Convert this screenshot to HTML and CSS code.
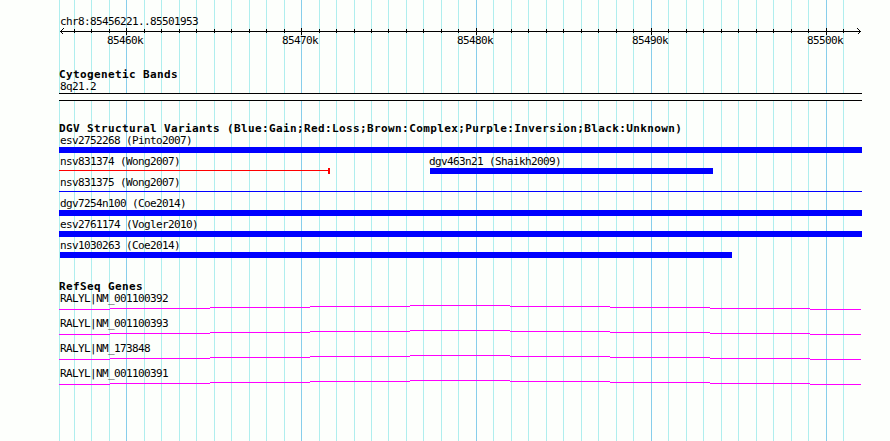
FILE: index.html
```html
<!DOCTYPE html>
<html lang="en">
<head>
  <meta charset="UTF-8">
  <meta name="viewport" content="width=device-width, initial-scale=1.0">
  <title>chr8:85456221..85501953</title>
  <link rel="stylesheet" href="styles.css">
</head>
<body>
  <div class="browser">
    <!-- grid lines, every 1k with a darker one every 10k -->
    <svg class="grid" width="890" height="441">
      <path class="minor" d="M59.5 0v441M74.5 0v441M91.5 0v441M109.5 0v441M144.5 0v441M161.5 0v441M179.5 0v441M196.5 0v441M214.5 0v441M231.5 0v441M249.5 0v441M266.5 0v441M284.5 0v441M319.5 0v441M336.5 0v441M354.5 0v441M371.5 0v441M388.5 0v441M406.5 0v441M423.5 0v441M441.5 0v441M458.5 0v441M493.5 0v441M511.5 0v441M528.5 0v441M546.5 0v441M563.5 0v441M581.5 0v441M598.5 0v441M616.5 0v441M633.5 0v441M668.5 0v441M686.5 0v441M703.5 0v441M721.5 0v441M738.5 0v441M756.5 0v441M773.5 0v441M791.5 0v441M808.5 0v441M843.5 0v441"/>
      <path class="major" d="M126.5 0v441M301.5 0v441M476.5 0v441M651.5 0v441M826.5 0v441"/>
    </svg>

    <div class="tracks">
      <div class="scale">
        <div class="label">chr8:85456221..85501953</div>
        <svg class="ruler" width="803" height="21" viewBox="59 27 803 21">
          <path d="M60 31.5H861"/>
          <path d="M60.5 31.5l3 -3M60.5 31.5l3 3M860.5 31.5l-3 -3M860.5 31.5l-3 3"/>
          <path d="M74.5 29v4M91.5 29v4M109.5 29v4M144.5 29v4M161.5 29v4M179.5 29v4M196.5 29v4M214.5 29v4M231.5 29v4M249.5 29v4M266.5 29v4M284.5 29v4M319.5 29v4M336.5 29v4M354.5 29v4M371.5 29v4M388.5 29v4M406.5 29v4M423.5 29v4M441.5 29v4M458.5 29v4M493.5 29v4M511.5 29v4M528.5 29v4M546.5 29v4M563.5 29v4M581.5 29v4M598.5 29v4M616.5 29v4M633.5 29v4M668.5 29v4M686.5 29v4M703.5 29v4M721.5 29v4M738.5 29v4M756.5 29v4M773.5 29v4M791.5 29v4M808.5 29v4M843.5 29v4"/>
          <path d="M126.5 28v7M301.5 28v7M476.5 28v7M651.5 28v7M826.5 28v7"/>
          <text x="107" y="44">85460k</text>
          <text x="282" y="44">85470k</text>
          <text x="457" y="44">85480k</text>
          <text x="632" y="44">85490k</text>
          <text x="807" y="44">85500k</text>
        </svg>
      </div>

      <div class="track bands">
        <h2>Cytogenetic Bands</h2>
        <div class="label">8q21.2</div>
        <div class="band"></div>
      </div>

      <div class="track variants">
        <h2>DGV Structural Variants (Blue:Gain;Red:Loss;Brown:Complex;Purple:Inversion;Black:Unknown)</h2>
        <div class="row">
          <div class="feature">
            <div class="label">esv2752268 (Pinto2007)</div>
            <div class="bar"></div>
          </div>
        </div>
        <div class="row split">
          <div class="feature">
            <div class="label">nsv831374 (Wong2007)</div>
            <div class="line loss"></div>
          </div>
          <div class="feature">
            <div class="label">dgv463n21 (Shaikh2009)</div>
            <div class="bar shaikh"></div>
          </div>
        </div>
        <div class="row">
          <div class="feature">
            <div class="label">nsv831375 (Wong2007)</div>
            <div class="line gain"></div>
          </div>
        </div>
        <div class="row">
          <div class="feature">
            <div class="label">dgv7254n100 (Coe2014)</div>
            <div class="bar"></div>
          </div>
        </div>
        <div class="row">
          <div class="feature">
            <div class="label">esv2761174 (Vogler2010)</div>
            <div class="bar"></div>
          </div>
        </div>
        <div class="row">
          <div class="feature">
            <div class="label">nsv1030263 (Coe2014)</div>
            <div class="bar coe"></div>
          </div>
        </div>
      </div>

      <div class="track genes">
        <h2>RefSeq Genes</h2>
        <div class="gene">
          <div class="label">RALYL|NM_001100392</div>
          <svg class="intron" width="803" height="5"><path d="M0 4.5H51M51 3.5H151M151 2.5H251M251 1.5H351M351 .5H451M451 1.5H551M551 2.5H651M651 3.5H751M751 4.5H802"/></svg>
        </div>
        <div class="gene">
          <div class="label">RALYL|NM_001100393</div>
          <svg class="intron" width="803" height="5"><path d="M0 4.5H51M51 3.5H151M151 2.5H251M251 1.5H351M351 .5H451M451 1.5H551M551 2.5H651M651 3.5H751M751 4.5H802"/></svg>
        </div>
        <div class="gene">
          <div class="label">RALYL|NM_173848</div>
          <svg class="intron" width="803" height="5"><path d="M0 4.5H51M51 3.5H151M151 2.5H251M251 1.5H351M351 .5H451M451 1.5H551M551 2.5H651M651 3.5H751M751 4.5H802"/></svg>
        </div>
        <div class="gene">
          <div class="label">RALYL|NM_001100391</div>
          <svg class="intron" width="803" height="5"><path d="M0 4.5H51M51 3.5H151M151 2.5H251M251 1.5H351M351 .5H451M451 1.5H551M551 2.5H651M651 3.5H751M751 4.5H802"/></svg>
        </div>
      </div>
    </div>
  </div>
</body>
</html>
```
FILE: styles.css
```css
* {
  box-sizing: border-box;
  margin: 0;
  padding: 0;
}

body {
  background-color: #fdfffc;
  color: #000;
  font-family: 'DejaVu Sans Mono', monospace;
}

svg {
  display: block;
}

.browser {
  position: relative;
  width: 890px;
  height: 441px;
  overflow: hidden;
}

.grid {
  position: absolute;
  top: 0;
  left: 0;
}

.grid path {
  shape-rendering: crispEdges;
}

.minor {
  stroke: #afeeee;
}

.major {
  stroke: #87ceeb;
}

.tracks {
  position: relative;
  width: 803px;
  margin-left: 59px;
  padding-top: 15px;
}

.label {
  height: 12px;
  padding-left: 1px;
  font-size: 11px;
  line-height: 14px;
  letter-spacing: -0.62px;
  white-space: pre;
}

h2 {
  height: 13px;
  padding-top: 1px;
  font-size: 11px;
  line-height: 13px;
  letter-spacing: 0.38px;
  white-space: pre;
}

.ruler path {
  stroke: #000;
  shape-rendering: crispEdges;
}

.ruler text {
  font-size: 11px;
  letter-spacing: -0.62px;
}

.bands {
  margin-top: 19px;
}

.band {
  height: 8px;
  margin-top: 1px;
  background-color: #fdfffc;
  border-top: 1px solid #000;
  border-bottom: 1px solid #000;
}

.variants {
  margin-top: 20px;
}

.row {
  height: 21px;
}

.split {
  display: grid;
  grid-template-columns: 369px 1fr;
}

.bar {
  height: 6px;
  margin-top: 1px;
  background-color: #0000ff;
}

.shaikh {
  width: 283px;
  margin-left: 2px;
}

.coe {
  width: 672px;
  margin-left: 1px;
}

.line {
  height: 6px;
  margin-top: 1px;
}

.gain {
  background: linear-gradient(#0000ff, #0000ff) 0 2px / 100% 1px no-repeat;
}

.loss {
  width: 271px;
  background: linear-gradient(#ff0000, #ff0000) 0 2px / 100% 1px no-repeat;
  border-right: 2px solid #ff0000;
}

.genes {
  margin-top: 19px;
}

.gene {
  height: 25px;
}

.intron {
  margin-top: 1px;
}

.intron path {
  stroke: #ff00ff;
  shape-rendering: crispEdges;
}
```
